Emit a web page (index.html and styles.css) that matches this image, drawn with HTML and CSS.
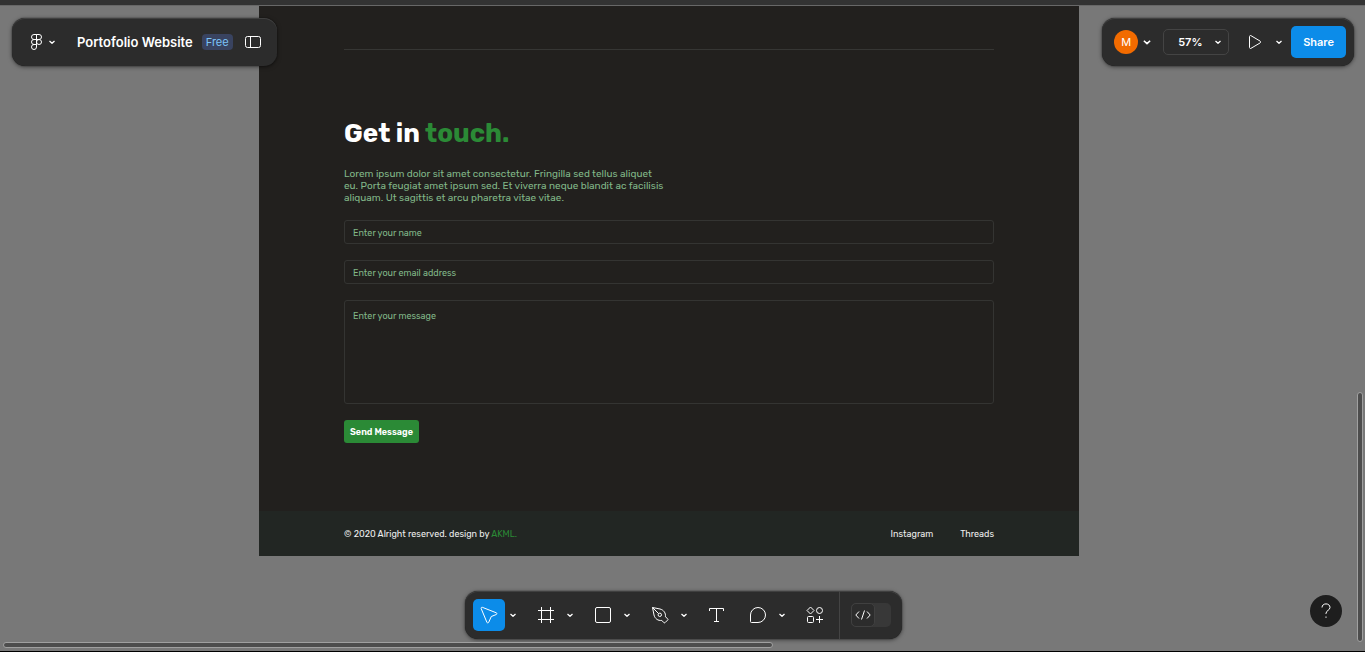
FILE: index.html
```html
<!DOCTYPE html>
<html lang="en">
<head>
<meta charset="utf-8">
<meta name="viewport" content="width=device-width, initial-scale=1">
<title>Portofolio Website</title>
<link rel="stylesheet" href="styles.css">
</head>
<body>
<svg class="sprite" aria-hidden="true">
  <symbol id="chevron" viewBox="0 0 8 8"><path d="M1.500 3 4 5.300 6.500 3" stroke-width="1.300"/></symbol>
</svg>
<main class="canvas">
  <article class="frame">
    <section class="contact">
      <h2 class="contact-title">Get in <span class="accent">touch.</span></h2>
      <p class="contact-text">Lorem ipsum dolor sit amet consectetur. Fringilla sed tellus aliquet<br>eu. Porta feugiat amet ipsum sed. Et viverra neque blandit ac facilisis<br>aliquam. Ut sagittis et arcu pharetra vitae vitae.</p>
      <form class="form">
        <input class="field" type="text" aria-label="Name" placeholder="Enter your name">
        <input class="field" type="email" aria-label="Email address" placeholder="Enter your email address">
        <textarea class="field field-message" aria-label="Message" placeholder="Enter your message"></textarea>
        <button class="send" type="button">Send Message</button>
      </form>
    </section>
    <footer class="footer">
      <span>© 2020 Alright reserved. design by <span class="accent">AKML.</span></span>
      <nav class="footer-links"><a href="#">Instagram</a><a href="#">Threads</a></nav>
    </footer>
  </article>
</main>

<header class="panel panel-file">
  <button class="menu" aria-label="Main menu">
    <svg class="icon" width="13" height="18" viewBox="0 0 13 18"><path d="M6.500 1.500h-2.500a2.500 2.500 0 0 0 0 5h2.500zM6.500 1.500h2.500a2.500 2.500 0 0 1 0 5h-2.500zM6.500 6.500h-2.500a2.500 2.500 0 0 0 0 5h2.500zM4 11.500a2.500 2.500 0 1 0 2.500 2.500v-2.500z"/><circle cx="9" cy="9" r="2.500"/></svg>
    <svg class="icon" width="8" height="8"><use href="#chevron"/></svg>
  </button>
  <h1 class="file-name">Portofolio Website</h1>
  <span class="badge">Free</span>
  <button class="plain" aria-label="Toggle sidebar">
    <svg class="icon" width="16" height="14" viewBox="0 0 16 14"><rect x=".5" y="1.500" width="15" height="11" rx="2"/><path d="M5.500 1.500v11"/></svg>
  </button>
</header>

<aside class="panel panel-share">
  <button class="account" aria-label="Account M"><span class="avatar">M</span><svg class="icon" width="10" height="10"><use href="#chevron"/></svg></button>
  <button class="zoom"><span>57%</span><svg class="icon" width="8" height="8"><use href="#chevron"/></svg></button>
  <button class="plain" aria-label="Present"><svg class="icon" width="14" height="16" viewBox="0 0 14 16"><path d="M1.500 2.500v11c0 .9.800 1.300 1.500.8l9-5.300c.8-.5.800-1.500 0-2l-9-5.300c-.7-.5-1.500-.1-1.500.8z"/></svg></button>
  <button class="play-options" aria-label="Present options"><svg class="icon" width="8" height="8"><use href="#chevron"/></svg></button>
  <button class="share">Share</button>
</aside>

<nav class="panel toolbar" aria-label="Tools">
  <div class="tools">
    <div class="tool-group">
      <button class="tool tool-active" aria-label="Move"><svg class="icon" width="20" height="20" viewBox="0 0 20 20"><path d="M3.300 2.300 17.300 7.800c.8.400.8 1.400 0 1.700l-5 2-2.600 5.800c-.4.900-1.500.8-1.800 0L2.200 3.600c-.3-.8.300-1.500 1.100-1.300z"/></svg></button>
      <button class="caret" aria-label="Move options"><svg class="icon" width="8" height="8"><use href="#chevron"/></svg></button>
    </div>
    <div class="tool-group">
      <button class="tool" aria-label="Frame"><svg class="icon" width="18" height="18" viewBox="0 0 18 18"><path d="M4.500 1v16M13.500 1v16M1 4.500h16M1 13.500h16"/></svg></button>
      <button class="caret" aria-label="Frame options"><svg class="icon" width="8" height="8"><use href="#chevron"/></svg></button>
    </div>
    <div class="tool-group">
      <button class="tool" aria-label="Rectangle"><svg class="icon" width="16" height="16" viewBox="0 0 16 16"><rect x=".5" y=".5" width="15" height="15" rx="1.500"/></svg></button>
      <button class="caret" aria-label="Shape options"><svg class="icon" width="8" height="8"><use href="#chevron"/></svg></button>
    </div>
    <div class="tool-group">
      <button class="tool" aria-label="Pen"><svg class="icon" width="18" height="18" viewBox="0 0 18 18"><path d="M1.500 1.500 9 3c3.500.8 6 4 5.400 7.800l2.300 2c.5.500.3.900-.1 1.300l-2.500 2.500c-.5.400-.9.400-1.300 0l-2-2.200C7 15 3.800 12.500 3 9zM1.500 1.500 7.600 7.600"/><circle cx="8.800" cy="8.800" r="1.700"/></svg></button>
      <button class="caret" aria-label="Pen options"><svg class="icon" width="8" height="8"><use href="#chevron"/></svg></button>
    </div>
    <button class="tool" aria-label="Text"><svg class="icon" width="16" height="16" viewBox="0 0 16 16"><path d="M.5 4V1.500h14V4M7.500 1.500v13M5 14.500h5"/></svg></button>
    <div class="tool-group">
      <button class="tool" aria-label="Comment"><svg class="icon" width="16" height="16" viewBox="0 0 16 16"><path d="M8 .5A7.500 7.500 0 0 1 8 15.500H1.500a1 1 0 0 1-1-1V8A7.500 7.500 0 0 1 8 .5z"/></svg></button>
      <button class="caret" aria-label="Comment options"><svg class="icon" width="8" height="8"><use href="#chevron"/></svg></button>
    </div>
    <button class="tool" aria-label="Actions"><svg class="icon" width="18" height="18" viewBox="0 0 18 18"><path d="M4.500 1 8 4.500 4.500 8 1 4.500zM13.500 10v7M10 13.500h7"/><circle cx="13.500" cy="4.500" r="3"/><rect x="1.500" y="10.500" width="6" height="6" rx="1"/></svg></button>
  </div>
  <div class="dev">
    <button class="dev-switch" role="switch" aria-checked="false" aria-label="Dev Mode"><span class="dev-knob"><svg class="icon" width="16" height="12" viewBox="0 0 16 12"><path d="M4 2.500.8 6 4 9.500M12 2.500 15.200 6 12 9.500M9.500 1.500l-3 9"/></svg></span></button>
  </div>
</nav>

<button class="help" aria-label="Help"><svg class="icon" width="12" height="16" viewBox="0 0 12 16"><path d="M2 4.500C2 2.300 3.700.9 6 .9s4 1.400 4 3.500c0 3-4 3-4 6V11"/><path d="M6 13.500v1.300"/></svg></button>
<div class="scroll scroll-x"></div>
<div class="scroll scroll-y"></div>
</body>
</html>
```
FILE: styles.css
```css
* { box-sizing: border-box; }

body {
  margin: 0;
  min-height: 100vh;
  display: flex;
  background: #787878;
  border-bottom: 1px solid #000;
  overflow: hidden;
  font-family: Inter, "Liberation Sans", sans-serif;
  font-size: 11px;
  color: #fff;
}

button {
  margin: 0;
  padding: 0;
  border: 0;
  background: none;
  color: inherit;
  font: inherit;
  display: flex;
  align-items: center;
  justify-content: center;
}

.sprite { position: absolute; width: 0; height: 0; }
.icon { display: block; flex: none; fill: none; stroke: #fff; stroke-width: 1; stroke-linejoin: round; }

/* Canvas */
.canvas {
  flex: 1;
  display: flex;
  align-items: flex-start;
  justify-content: center;
  padding-right: 27px;
  border-top: 5px solid #333;
  box-shadow: inset 0 1px #686868;
}

.frame {
  width: 100%;
  max-width: 820px;
  margin-top: 1px;
  background: #22201e;
  font-family: Rubik, Roboto, sans-serif;
  font-size: 9px;
}

.contact { margin: 0 85px; padding: 43px 0 68px; }
.contact::before { content: ""; display: block; height: 1px; background: #363634; }
.contact-title { margin: 68px 0 18px; font-size: 26px; line-height: 32px; font-weight: 700; }
.accent { color: #2b8a36; }
.contact-text { margin: 0 0 16px; font-size: 10px; line-height: 12px; color: #81b788; }

.form { display: flex; flex-direction: column; gap: 16px; align-items: flex-start; }
.field {
  width: 100%;
  height: 24px;
  padding: 1px 8px 0;
  border: 1px solid #343432;
  border-radius: 3px;
  background: transparent;
  color: #fff;
  font: inherit;
  outline: 0;
}
.field::placeholder { color: #81b788; opacity: 1; }
.field-message { display: block; height: 104px; padding: 9px 8px; line-height: 12px; resize: none; }
.send { height: 23px; padding: 0 6px; border-radius: 3px; background: #2b8a36; font-weight: 600; }

.footer {
  display: flex;
  align-items: center;
  justify-content: space-between;
  height: 45px;
  padding: 0 85px;
  background: #222623;
  color: #eee;
}
.footer-links { display: flex; gap: 27px; }
.footer-links a { color: inherit; text-decoration: none; }

/* Floating panels */
.panel {
  position: absolute;
  display: flex;
  align-items: center;
  height: 48px;
  border-radius: 13px;
  background: #2c2c2c;
  box-shadow: 0 0 1px #111, 0 1px 4px rgba(0, 0, 0, .5), inset 0 1px #404040;
}

.panel-file { top: 18px; left: 12px; padding: 0 16px 0 18px; }
.menu { gap: 5px; }
.file-name { margin: 0 9px 0 21px; font-size: 13px; font-weight: 600; white-space: nowrap; }
.badge { margin-right: 12px; padding: 0 4px; border-radius: 4px; background: #394360; color: #7cc4f8; line-height: 16px; }

.panel-share { top: 18px; right: 11px; padding: 0 8px 0 12px; }
.account { gap: 4px; }
.avatar { width: 24px; height: 24px; border-radius: 50%; background: #f26b00; line-height: 24px; text-align: center; }
.zoom { width: 66px; height: 26px; margin: 0 19px 0 11px; padding: 0 6px 0 14px; justify-content: space-between; border: 1px solid #444; border-radius: 5px; font-weight: 600; }
.play-options { margin: 0 8px 0 13px; }
.share { height: 32px; padding: 0 12px; border-radius: 5px; background: #0c8ce9; font-weight: 600; }

.toolbar { bottom: 13px; left: 1px; right: 0; width: max-content; margin: 0 auto; }
.tools { display: flex; gap: 9px; padding: 0 8px; }
.tool-group { display: flex; }
.tool { width: 32px; height: 32px; border-radius: 5px; }
.tool-active { background: #0c8ce9; }
.caret { width: 16px; height: 32px; }
.dev { display: flex; align-items: center; align-self: stretch; padding: 0 11px; border-left: 1px solid #444; }
.dev-switch { width: 40px; height: 24px; justify-content: flex-start; border-radius: 5px; background: #383838; }
.dev-knob { display: flex; align-items: center; justify-content: center; width: 24px; height: 24px; border: 1px solid #404040; border-radius: 5px; background: #2c2c2c; }

.help { position: absolute; right: 23px; bottom: 25px; width: 32px; height: 32px; border-radius: 50%; background: #1e1e1e; }

.scroll { position: absolute; border: 1px solid #a0a0a0; border-radius: 3px; background: #4d4d4d; }
.scroll-x { left: 3px; bottom: 4px; width: 770px; height: 6px; }
.scroll-y { right: 2px; bottom: 10px; width: 6px; height: 250px; }
```
